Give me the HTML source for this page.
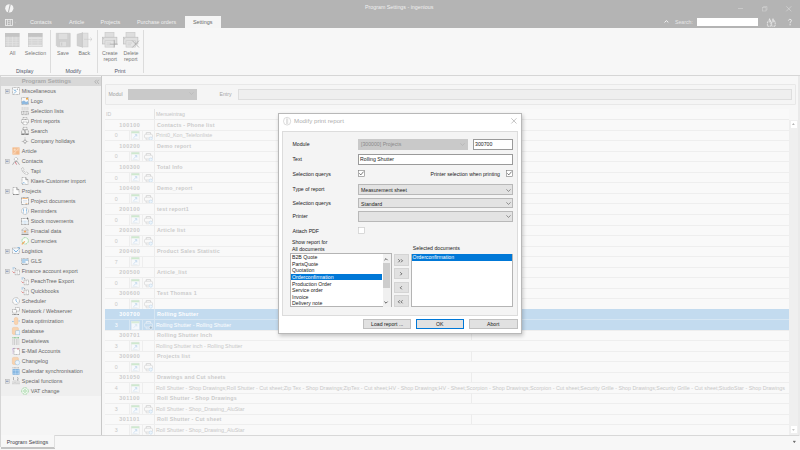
<!DOCTYPE html>
<html><head><meta charset="utf-8">
<style>
*{margin:0;padding:0;box-sizing:border-box}
html,body{width:800px;height:450px;overflow:hidden;background:#f5f5f5;font-family:"Liberation Sans",sans-serif;position:relative}
.a{position:absolute}
.t{position:absolute;white-space:nowrap;line-height:1}
svg{overflow:visible}
</style></head><body>

<div class="a" style="left:0px;top:0px;width:800px;height:27.7px;background:#b4b4b4"></div>
<svg class="a" style="left:4.5px;top:3.5px;" width="9" height="9" viewBox="0 0 9 9"><ellipse cx="4.3" cy="4.3" rx="4.1" ry="4.15" fill="#f4f4f4"/><path d="M5.3 0.2L3.4 8.4" stroke="#b4b4b4" stroke-width="1.1"/></svg>
<div class="t" style="left:365px;top:5.2px;font-size:5.3px;color:#f0f0f0;">Program Settings - ingenious</div>
<div class="a" style="left:738px;top:8px;width:5px;height:0.6px;background:#c8c8c8"></div>
<svg class="a" style="left:762px;top:6px;" width="6" height="6" viewBox="0 0 6 6"><rect x="0.5" y="1.5" width="3.5" height="3.5" fill="none" stroke="#d0d0d0" stroke-width="0.6"/><path d="M1.5 1.5 V0.5 H5 V4 H4" fill="none" stroke="#d0d0d0" stroke-width="0.6"/></svg>
<svg class="a" style="left:786px;top:5.5px;" width="6" height="6" viewBox="0 0 6 6"><path d="M0.3 0.3 L5.3 5.3 M5.3 0.3 L0.3 5.3" stroke="#dcdcdc" stroke-width="0.6"/></svg>
<svg class="a" style="left:5.2px;top:19px;" width="11" height="7" viewBox="0 0 11 7"><rect x="0.4" y="0.4" width="7" height="6" fill="none" stroke="#f0f0f0" stroke-width="0.8"/><path d="M2.5 0.4V6.4M5.3 0.4V6.4" stroke="#f0f0f0" stroke-width="0.7"/><path d="M2.5 2.3H5.3M2.5 4.4H5.3" stroke="#e0e0e0" stroke-width="0.7"/><path d="M9.6 3.2l0.8 0.6 0.8-0.6" fill="none" stroke="#dddddd" stroke-width="0.4"/></svg>
<div class="a" style="left:185px;top:15.7px;width:36px;height:13px;background:#f5f5f5"></div>
<div class="t" style="left:30px;top:20.3px;font-size:5.5px;color:#f0f0f0;">Contacts</div>
<div class="t" style="left:69px;top:20.3px;font-size:5.5px;color:#f0f0f0;">Article</div>
<div class="t" style="left:100.5px;top:20.3px;font-size:5.5px;color:#f0f0f0;">Projects</div>
<div class="t" style="left:137px;top:20.3px;font-size:5.35px;color:#f0f0f0;">Purchase orders</div>
<div class="t" style="left:193px;top:20.3px;font-size:5.4px;color:#6a6a6a;">Settings</div>
<svg class="a" style="left:664px;top:20.3px;" width="5" height="3" viewBox="0 0 5 3"><path d="M0.5 2.4 L2.4 0.6 L4.3 2.4" fill="none" stroke="#f6f6f6" stroke-width="1"/></svg>
<div class="t" style="left:675px;top:20.2px;font-size:5.2px;color:#e6e6e6;">Search:</div>
<div class="a" style="left:697px;top:17.8px;width:61px;height:8.3px;background:#ffffff"></div>
<svg class="a" style="left:766.8px;top:17.8px;" width="9" height="9" viewBox="0 0 9 9"><path d="M2.6 0.5V2M6 0.5V2" stroke="#ececec" stroke-width="1"/><path d="M1.5 2.2H3.6V4M5 2.2H7.1V4" fill="none" stroke="#ececec" stroke-width="0.9"/><rect x="0.4" y="3.8" width="3.5" height="4.4" fill="none" stroke="#ececec" stroke-width="0.9" stroke-dasharray="1.1 0.5"/><rect x="4.7" y="3.8" width="3.5" height="4.4" fill="none" stroke="#ececec" stroke-width="0.9" stroke-dasharray="1.1 0.5"/><path d="M3.9 5.2H4.7" stroke="#ececec" stroke-width="0.8"/></svg>
<svg class="a" style="left:788.4px;top:18.6px;" width="4" height="7" viewBox="0 0 4 7"><path d="M0.4 1.6C0.6 0.6 1.4 0.3 2 0.3C2.9 0.3 3.5 0.9 3.5 1.7C3.5 2.6 2.6 2.9 2.1 3.5V4.3" fill="none" stroke="#efefef" stroke-width="0.9"/><rect x="1.55" y="5.2" width="1.1" height="1.1" fill="#efefef"/></svg>
<div class="a" style="left:0px;top:27.7px;width:800px;height:47.3px;background:#f7f7f7"></div>
<div class="a" style="left:0px;top:75px;width:800px;height:1px;background:#d6d6d6"></div>
<svg class="a" style="left:5px;top:33px;" width="15" height="14" viewBox="0 0 15 14"><rect x="0.3" y="0.3" width="13.8" height="13.4" fill="#d5d5d5" stroke="#c6c6c6" stroke-width="0.6"/><rect x="0" y="0" width="14.4" height="3.8" fill="#c4c4c4"/><path d="M0.6 5H13.8" stroke="#e4e4e4" stroke-width="0.7"/><path d="M0.6 7.2H13.8" stroke="#e4e4e4" stroke-width="0.7"/><path d="M0.6 9.7H13.8" stroke="#e4e4e4" stroke-width="0.7"/><path d="M0.6 11.9H13.8" stroke="#e4e4e4" stroke-width="0.7"/><path d="M3.1 3.8V13.4" stroke="#e4e4e4" stroke-width="0.7"/><path d="M7.5 3.8V13.4" stroke="#e4e4e4" stroke-width="0.7"/><path d="M11 3.8V13.4" stroke="#e4e4e4" stroke-width="0.7"/></svg>
<svg class="a" style="left:28px;top:33px;" width="15" height="14" viewBox="0 0 15 14"><rect x="0.3" y="0.3" width="13.8" height="13.4" fill="#d5d5d5" stroke="#c6c6c6" stroke-width="0.6"/><rect x="0" y="0" width="14.4" height="3.8" fill="#c4c4c4"/><rect x="0.6" y="4.3" width="13.2" height="1.6" fill="#e6e6e6"/><rect x="0.6" y="11.8" width="13.2" height="1.6" fill="#e6e6e6"/><path d="M3.8 3.8V13.4" stroke="#e2e2e2" stroke-width="0.7"/><path d="M10 3.8V13.4" stroke="#e2e2e2" stroke-width="0.7"/><path d="M0.6 7.6H13.8" stroke="#e2e2e2" stroke-width="0.6"/><path d="M0.6 9.8H13.8" stroke="#e2e2e2" stroke-width="0.6"/></svg>
<svg class="a" style="left:56.4px;top:32.9px;" width="15" height="15" viewBox="0 0 15 15"><path d="M0.3 0.3H14.2V13.8H1.6L0.3 12.5Z" fill="#d0d0d0" stroke="#c6c6c6" stroke-width="0.6"/><rect x="2.3" y="0.4" width="9.5" height="6" fill="#dedede" stroke="#cacaca" stroke-width="0.5"/><rect x="3.8" y="8.4" width="6.7" height="5.4" fill="#dedede" stroke="#cacaca" stroke-width="0.5"/><rect x="5" y="9.6" width="1.3" height="3" fill="#cccccc"/></svg>
<svg class="a" style="left:77px;top:32px;" width="16" height="16" viewBox="0 0 16 16"><path d="M0.2 2.2L5.4 1.1V14.9L0.2 13.8Z" fill="#d0d0d0" stroke="#c2c2c2" stroke-width="0.6"/><rect x="5.4" y="1.1" width="5.6" height="13.8" fill="#e0e0e0" stroke="#cdcdcd" stroke-width="0.6"/><path d="M5.4 0V15.8" stroke="#c4c4c4" stroke-width="0.6"/><path d="M7 7.3H15M13.2 5.5L15 7.3L13.2 9.1" fill="none" stroke="#c8c8c8" stroke-width="0.6"/></svg>
<svg class="a" style="left:102px;top:32px;" width="16" height="16" viewBox="0 0 16 16"><rect x="3" y="0.4" width="9" height="5" fill="#dedede" stroke="#c6c6c6" stroke-width="0.6"/><rect x="0.3" y="5.2" width="14.6" height="6.8" fill="#e0e0e0" stroke="#bababa" stroke-width="0.6"/><rect x="1.2" y="6.3" width="0.9" height="0.9" fill="#bbb"/><rect x="3" y="8.8" width="9.3" height="6.3" fill="#e4e4e4" stroke="#c6c6c6" stroke-width="0.6"/><path d="M4.5 11H9M4.5 12.8H8" stroke="#c8c8c8" stroke-width="0.6"/><path d="M12.2 7.8V15.5M7.8 12.2H15.8" stroke="#a4a4a4" stroke-width="0.75"/></svg>
<svg class="a" style="left:123px;top:32px;" width="16" height="16" viewBox="0 0 16 16"><rect x="3" y="0.4" width="9" height="5" fill="#dedede" stroke="#c6c6c6" stroke-width="0.6"/><rect x="0.3" y="5.2" width="14.6" height="6.8" fill="#e0e0e0" stroke="#bababa" stroke-width="0.6"/><rect x="1.2" y="6.3" width="0.9" height="0.9" fill="#bbb"/><rect x="3" y="8.8" width="9.3" height="6.3" fill="#e4e4e4" stroke="#c6c6c6" stroke-width="0.6"/><path d="M4.5 11H9M4.5 12.8H8" stroke="#c8c8c8" stroke-width="0.6"/><path d="M9.3 8.6L16 15.5M16 8.6L9.3 15.5" stroke="#a4a4a4" stroke-width="0.75"/></svg>
<div class="t" style="left:9.5px;top:51.0px;font-size:5.3px;color:#777777;">All</div>
<div class="t" style="left:24.8px;top:51.0px;font-size:5.2px;color:#777777;">Selection</div>
<div class="t" style="left:57px;top:51.0px;font-size:5.2px;color:#777777;">Save</div>
<div class="t" style="left:78.5px;top:51.0px;font-size:5.2px;color:#777777;">Back</div>
<div class="t" style="left:102px;top:51.0px;font-size:5.2px;color:#777777;">Create</div>
<div class="t" style="left:103.5px;top:57.2px;font-size:5.2px;color:#777777;">report</div>
<div class="t" style="left:123.5px;top:51.0px;font-size:5.2px;color:#777777;">Delete</div>
<div class="t" style="left:124px;top:57.2px;font-size:5.2px;color:#777777;">report</div>
<div class="t" style="left:16px;top:69.3px;font-size:5.3px;color:#505468;">Display</div>
<div class="t" style="left:65.5px;top:69.3px;font-size:5.3px;color:#505468;">Modify</div>
<div class="t" style="left:114.5px;top:69.3px;font-size:5.3px;color:#505468;">Print</div>
<div class="a" style="left:50px;top:30px;width:0.7px;height:43px;background:#dcdcdc"></div>
<div class="a" style="left:97px;top:30px;width:0.7px;height:43px;background:#dcdcdc"></div>
<div class="a" style="left:143px;top:30px;width:0.7px;height:43px;background:#dcdcdc"></div>
<div class="a" style="left:0px;top:76px;width:101px;height:359px;background:#f5f5f5"></div>
<div class="a" style="left:0px;top:76px;width:1px;height:371px;background:#d6d6d6"></div>
<div class="a" style="left:1px;top:77px;width:100px;height:9px;background:#d8d8d8"></div>
<div class="t" style="left:21.7px;top:78.8px;font-size:5.95px;color:#a9a9a9;font-weight:bold;">Program Settings</div>
<svg class="a" style="left:94px;top:78.5px;" width="6" height="6" viewBox="0 0 6 6"><path d="M2.5 0.8L0.8 2.8L2.5 4.8M4.8 0.8L3.1 2.8L4.8 4.8" fill="none" stroke="#9a9a9a" stroke-width="0.6"/></svg>
<div class="a" style="left:1px;top:86px;width:100px;height:310px;background:#efefef"></div>
<svg class="a" style="left:5px;top:89.1px" width="5" height="5" viewBox="0 0 5 5"><rect x="0.25" y="0.25" width="4" height="4" fill="#e2e2e2" stroke="#b0b0b0" stroke-width="0.5"/><path d="M1 2.25H3.5" stroke="#5070a8" stroke-width="0.7"/></svg>
<svg class="a" style="left:12px;top:87px;" width="8" height="8" viewBox="0 0 8 8"><rect x="0.5" y="0.5" width="7" height="7" fill="#fafafa" stroke="#7a7a7a" stroke-width="0.5" stroke-dasharray="0.9 0.5"/><path d="M2 2.5L4 4.5L2 6.5M4 2.5L2.5 4" stroke="#5aa0d8" stroke-width="0.7" fill="none"/><path d="M5.5 1.5V3" stroke="#7a7a7a" stroke-width="0.5"/></svg>
<div class="t" style="left:21.8px;top:88.9px;font-size:5.4px;color:#686868;">Miscellaneous</div>
<svg class="a" style="left:21px;top:97px;" width="8" height="8" viewBox="0 0 8 8"><rect x="0.5" y="0.5" width="7" height="7" fill="#f6f6f6" stroke="#7a7a7a" stroke-width="0.5" stroke-dasharray="0.9 0.5"/><path d="M0.8 7.2V4.5L3 3.5L5 5L7.2 4V7.2Z" fill="#8cb8e0"/><circle cx="6" cy="1.8" r="1" fill="#f0a030"/></svg>
<div class="t" style="left:30.7px;top:98.9px;font-size:5.4px;color:#686868;">Logo</div>
<svg class="a" style="left:21px;top:107px;" width="8" height="8" viewBox="0 0 8 8"><path d="M1.2 0.3V3.2M3.1 0.3V3.2M5 0.3V3.2M6.9 0.3V3.2" stroke="#8a8a8a" stroke-width="0.45" stroke-dasharray="0.7 0.35"/><rect x="0.6" y="4.4" width="6.8" height="3.2" fill="#f6f6f6" stroke="#666" stroke-width="0.5" stroke-dasharray="0.9 0.5"/><path d="M0.6 6H7.4M2.8 4.4V7.6M5.2 4.4V7.6" stroke="#777" stroke-width="0.4" stroke-dasharray="0.9 0.5"/></svg>
<div class="t" style="left:30.7px;top:108.9px;font-size:5.4px;color:#686868;">Selection lists</div>
<svg class="a" style="left:21px;top:117px;" width="8" height="8" viewBox="0 0 8 8"><rect x="2" y="0.5" width="4" height="2" fill="none" stroke="#7a7a7a" stroke-width="0.5" stroke-dasharray="0.9 0.5"/><rect x="0.5" y="2.5" width="7" height="3.5" rx="0.8" fill="#f6f6f6" stroke="#7a7a7a" stroke-width="0.6" stroke-dasharray="0.9 0.5"/><rect x="2" y="5" width="4" height="2.6" fill="#fff" stroke="#7a7a7a" stroke-width="0.5" stroke-dasharray="0.9 0.5"/></svg>
<div class="t" style="left:30.7px;top:118.9px;font-size:5.4px;color:#686868;">Print reports</div>
<svg class="a" style="left:21px;top:127px;" width="8" height="8" viewBox="0 0 8 8"><rect x="2" y="0.4" width="4" height="2.4" fill="#f4f4f4" stroke="#666" stroke-width="0.5" stroke-dasharray="0.9 0.5"/><path d="M0.7 7.5V3.6L1.6 2.8H3.4V7.5M4.6 7.5V2.8H6.4L7.3 3.6V7.5" fill="#f6f6f6" stroke="#555" stroke-width="0.55" stroke-dasharray="0.9 0.5"/><rect x="0.5" y="6.6" width="3" height="1.2" fill="#666"/><rect x="4.5" y="6.6" width="3" height="1.2" fill="#666"/></svg>
<div class="t" style="left:30.7px;top:128.9px;font-size:5.4px;color:#686868;">Search</div>
<svg class="a" style="left:21px;top:137px;" width="8" height="8" viewBox="0 0 8 8"><path d="M4 0.5V7.5M0.8 4.5H7.2" stroke="#7a7a7a" stroke-width="0.5" stroke-dasharray="0.9 0.5"/><circle cx="4" cy="4.5" r="1.4" fill="#f4f4f4" stroke="#7a7a7a" stroke-width="0.5"/></svg>
<div class="t" style="left:30.7px;top:138.9px;font-size:5.4px;color:#686868;">Company holidays</div>
<svg class="a" style="left:12px;top:147px;" width="8" height="8" viewBox="0 0 8 8"><rect x="0.3" y="0.3" width="7.4" height="7.4" rx="0.6" fill="#f5c49c"/><rect x="1.2" y="1.2" width="2.8" height="2.8" fill="#f9dcc0" stroke="#eea870" stroke-width="0.35"/><path d="M1.5 6.8L6.8 1.5" stroke="#fae0c8" stroke-width="0.7"/><rect x="4.3" y="4.3" width="2.6" height="2.6" fill="#f3b888"/></svg>
<div class="t" style="left:21.8px;top:148.9px;font-size:5.4px;color:#686868;">Article</div>
<svg class="a" style="left:5px;top:159.1px" width="5" height="5" viewBox="0 0 5 5"><rect x="0.25" y="0.25" width="4" height="4" fill="#e2e2e2" stroke="#b0b0b0" stroke-width="0.5"/><path d="M1 2.25H3.5" stroke="#5070a8" stroke-width="0.7"/></svg>
<svg class="a" style="left:12px;top:157px;" width="8" height="8" viewBox="0 0 8 8"><circle cx="4" cy="2.2" r="1.7" fill="#fbfbfb" stroke="#7a7a7a" stroke-width="0.5" stroke-dasharray="0.9 0.5"/><path d="M0.5 7.8L2.8 4.4H5.2L7.5 7.8" fill="none" stroke="#7a7a7a" stroke-width="0.55"/><path d="M3.3 5L4.6 7.6" stroke="#d05060" stroke-width="0.7"/></svg>
<div class="t" style="left:21.8px;top:158.9px;font-size:5.4px;color:#686868;">Contacts</div>
<svg class="a" style="left:21px;top:167px;" width="8" height="8" viewBox="0 0 8 8"><path d="M0.8 1.5C0.5 3.5 2.5 6.5 5.5 7.5C6.5 7.5 7.5 6.8 7.2 6L5.6 5L4.6 5.8C3.5 5 2.8 4.2 2.2 3.2L3 2.2L2 0.6C1.4 0.5 1 1 0.8 1.5Z" fill="#f8f8f8" stroke="#7a7a7a" stroke-width="0.5" stroke-dasharray="0.9 0.5"/></svg>
<div class="t" style="left:30.7px;top:168.9px;font-size:5.4px;color:#686868;">Tapi</div>
<svg class="a" style="left:21px;top:177px;" width="8" height="8" viewBox="0 0 8 8"><path d="M1 0.5H4.8L7 2.7V7.5H1Z" fill="#fbfbfb" stroke="#7a7a7a" stroke-width="0.5" stroke-dasharray="0.9 0.5"/><path d="M4.8 0.5V2.7H7" fill="none" stroke="#555" stroke-width="0.5"/><path d="M1.5 6.8L2.8 5.3L4 6.5" fill="none" stroke="#6aa8dc" stroke-width="0.7"/></svg>
<div class="t" style="left:30.7px;top:178.9px;font-size:5.4px;color:#686868;">Klaes-Customer import</div>
<svg class="a" style="left:5px;top:189.1px" width="5" height="5" viewBox="0 0 5 5"><rect x="0.25" y="0.25" width="4" height="4" fill="#e2e2e2" stroke="#b0b0b0" stroke-width="0.5"/><path d="M1 2.25H3.5" stroke="#5070a8" stroke-width="0.7"/></svg>
<svg class="a" style="left:12px;top:187px;" width="8" height="8" viewBox="0 0 8 8"><path d="M1 0.5H4.8L7 2.7V7.5H1Z" fill="#fdfdfd" stroke="#7a7a7a" stroke-width="0.5" stroke-dasharray="0.9 0.5"/><path d="M4.8 0.5V2.7H7" fill="none" stroke="#555" stroke-width="0.5"/><path d="M1 7.5H7" stroke="#555" stroke-width="0.6" stroke-dasharray="0.9 0.5"/></svg>
<div class="t" style="left:21.8px;top:188.9px;font-size:5.4px;color:#686868;">Projects</div>
<svg class="a" style="left:21px;top:197px;" width="8" height="8" viewBox="0 0 8 8"><rect x="0.5" y="0.5" width="7" height="7" fill="#fafafa" stroke="#555" stroke-width="0.55" stroke-dasharray="0.9 0.5"/><path d="M1.3 1.5H6.7" stroke="#f0a050" stroke-width="0.7"/><path d="M2 3.5H6M2 5H6" stroke="#b8c8d8" stroke-width="0.4"/><path d="M4.5 6.5H6.5" stroke="#f0a050" stroke-width="0.5"/></svg>
<div class="t" style="left:30.7px;top:198.9px;font-size:5.4px;color:#686868;">Project documents</div>
<svg class="a" style="left:21px;top:207px;" width="8" height="8" viewBox="0 0 8 8"><circle cx="4" cy="4" r="3.4" fill="#fafafa" stroke="#7a7a7a" stroke-width="0.5" stroke-dasharray="0.9 0.5"/><path d="M2.5 1.8V6.3M5.5 1.8V6.3" stroke="#5aa0d8" stroke-width="0.8" stroke-dasharray="0.9 0.5"/></svg>
<div class="t" style="left:30.7px;top:208.9px;font-size:5.4px;color:#686868;">Reminders</div>
<svg class="a" style="left:21px;top:217px;" width="8" height="8" viewBox="0 0 8 8"><rect x="0.5" y="1.5" width="7" height="6" fill="#fafafa" stroke="#555" stroke-width="0.55" stroke-dasharray="0.9 0.5"/><path d="M1.5 4.2H6.5M1.5 6H6.5" stroke="#6aa8dc" stroke-width="0.5" stroke-dasharray="0.9 0.5"/><path d="M6.5 0.5V2.5" stroke="#444" stroke-width="0.6"/></svg>
<div class="t" style="left:30.7px;top:218.9px;font-size:5.4px;color:#686868;">Stock movements</div>
<svg class="a" style="left:21px;top:227px;" width="8" height="8" viewBox="0 0 8 8"><path d="M0.5 3L4 0.6L7.5 3Z" fill="#f8f8f8" stroke="#7a7a7a" stroke-width="0.5" stroke-dasharray="0.9 0.5"/><path d="M1.2 3.5V7M3 3.5V7M5 3.5V7M6.8 3.5V7" stroke="#7a7a7a" stroke-width="0.5" stroke-dasharray="0.9 0.5"/><circle cx="4" cy="4.5" r="1.1" fill="#f4a860"/><path d="M0.5 7.5H7.5" stroke="#555" stroke-width="0.6"/></svg>
<div class="t" style="left:30.7px;top:228.9px;font-size:5.4px;color:#686868;">Finacial data</div>
<svg class="a" style="left:21px;top:237px;" width="8" height="8" viewBox="0 0 8 8"><circle cx="4.2" cy="3.8" r="3.2" fill="#f6fbf6" stroke="#6cc070" stroke-width="0.7" stroke-dasharray="1 0.5"/><path d="M0.8 7.4L3.8 4.4" stroke="#f4a860" stroke-width="1.2"/></svg>
<div class="t" style="left:30.7px;top:238.9px;font-size:5.4px;color:#686868;">Currencies</div>
<svg class="a" style="left:5px;top:249.1px" width="5" height="5" viewBox="0 0 5 5"><rect x="0.25" y="0.25" width="4" height="4" fill="#e2e2e2" stroke="#b0b0b0" stroke-width="0.5"/><path d="M1 2.25H3.5" stroke="#5070a8" stroke-width="0.7"/></svg>
<svg class="a" style="left:12px;top:247px;" width="8" height="8" viewBox="0 0 8 8"><rect x="0.5" y="1" width="6.8" height="5.5" fill="#f4f8fc" stroke="#7a7a7a" stroke-width="0.5" stroke-dasharray="0.9 0.5"/><path d="M1.5 2.5L4 5L6.5 2.5" stroke="#5aa0d8" stroke-width="0.8" fill="none"/><path d="M5.5 0.5H7.5V2" stroke="#5aa0d8" stroke-width="0.6" fill="none"/></svg>
<div class="t" style="left:21.8px;top:248.9px;font-size:5.4px;color:#686868;">Logistics</div>
<svg class="a" style="left:21px;top:257px;" width="8" height="8" viewBox="0 0 8 8"><rect x="0.5" y="1.5" width="7" height="5.5" fill="#f4f8fc" stroke="#7a7a7a" stroke-width="0.5" stroke-dasharray="0.9 0.5"/><path d="M1 3H7M1 5H4.5" stroke="#5aa0d8" stroke-width="0.9"/><path d="M1 7.5H7" stroke="#555" stroke-width="0.5" stroke-dasharray="0.9 0.5"/></svg>
<div class="t" style="left:30.7px;top:258.9px;font-size:5.4px;color:#686868;">GLS</div>
<svg class="a" style="left:5px;top:269.1px" width="5" height="5" viewBox="0 0 5 5"><rect x="0.25" y="0.25" width="4" height="4" fill="#e2e2e2" stroke="#b0b0b0" stroke-width="0.5"/><path d="M1 2.25H3.5" stroke="#5070a8" stroke-width="0.7"/></svg>
<svg class="a" style="left:12px;top:267px;" width="8" height="8" viewBox="0 0 8 8"><path d="M0.5 0.8H2.8M0.5 2H2" stroke="#6aa8dc" stroke-width="0.5"/><path d="M3 0.8L4 2" stroke="#555" stroke-width="0.5"/><path d="M3 3H7.5V7.7H3Z" fill="#fafafa" stroke="#7a7a7a" stroke-width="0.5" stroke-dasharray="0.9 0.5"/><path d="M5.2 3V7.7" stroke="#7a7a7a" stroke-width="0.45" stroke-dasharray="0.9 0.5"/><path d="M0.5 4.5L1.8 5.8L2.6 5" stroke="#e04848" stroke-width="0.6" fill="none"/></svg>
<div class="t" style="left:21.8px;top:268.9px;font-size:5.4px;color:#686868;">Finance account export</div>
<svg class="a" style="left:21px;top:277px;" width="8" height="8" viewBox="0 0 8 8"><path d="M0.5 0.8H2.8M0.5 2H2" stroke="#6aa8dc" stroke-width="0.5"/><path d="M3 0.8L4 2" stroke="#555" stroke-width="0.5"/><path d="M3 3H7.5V7.7H3Z" fill="#fafafa" stroke="#7a7a7a" stroke-width="0.5" stroke-dasharray="0.9 0.5"/><path d="M5.2 3V7.7" stroke="#7a7a7a" stroke-width="0.45" stroke-dasharray="0.9 0.5"/><path d="M0.5 4.5L1.8 5.8L2.6 5" stroke="#e04848" stroke-width="0.6" fill="none"/></svg>
<div class="t" style="left:30.7px;top:278.9px;font-size:5.4px;color:#686868;">PeachTree Export</div>
<svg class="a" style="left:21px;top:287px;" width="8" height="8" viewBox="0 0 8 8"><path d="M0.5 0.8H2.8M0.5 2H2" stroke="#6aa8dc" stroke-width="0.5"/><path d="M3 0.8L4 2" stroke="#555" stroke-width="0.5"/><path d="M3 3H7.5V7.7H3Z" fill="#fafafa" stroke="#7a7a7a" stroke-width="0.5" stroke-dasharray="0.9 0.5"/><path d="M5.2 3V7.7" stroke="#7a7a7a" stroke-width="0.45" stroke-dasharray="0.9 0.5"/><path d="M0.5 4.5L1.8 5.8L2.6 5" stroke="#e04848" stroke-width="0.6" fill="none"/></svg>
<div class="t" style="left:30.7px;top:288.9px;font-size:5.4px;color:#686868;">Quickbooks</div>
<svg class="a" style="left:12px;top:297px;" width="8" height="8" viewBox="0 0 8 8"><circle cx="4" cy="4" r="3.4" fill="#fbfbfb" stroke="#7a7a7a" stroke-width="0.55" stroke-dasharray="0.9 0.5"/><path d="M4 1.8V4L5.5 5.5" stroke="#5aa0d8" stroke-width="0.6" fill="none"/></svg>
<div class="t" style="left:21.8px;top:298.9px;font-size:5.4px;color:#686868;">Scheduler</div>
<svg class="a" style="left:12px;top:307px;" width="8" height="8" viewBox="0 0 8 8"><rect x="3.5" y="0.5" width="4" height="3.5" fill="#fafafa" stroke="#7a7a7a" stroke-width="0.5" stroke-dasharray="0.9 0.5"/><rect x="0.5" y="2.5" width="4" height="3.5" fill="#fafafa" stroke="#7a7a7a" stroke-width="0.5" stroke-dasharray="0.9 0.5"/><path d="M0.5 7.5H7.5" stroke="#555" stroke-width="0.8" stroke-dasharray="0.9 0.5"/></svg>
<div class="t" style="left:21.8px;top:308.9px;font-size:5.4px;color:#686868;">Network / Webserver</div>
<svg class="a" style="left:12px;top:317px;" width="8" height="8" viewBox="0 0 8 8"><rect x="2.3" y="0.4" width="3.6" height="7.2" rx="1.6" fill="#f8d4b0" stroke="#f0b888" stroke-width="0.4"/><path d="M0 4.5H1.8M6.4 4H8" stroke="#6aa8dc" stroke-width="0.6"/></svg>
<div class="t" style="left:21.8px;top:318.9px;font-size:5.4px;color:#686868;">Data optimization</div>
<svg class="a" style="left:12px;top:327px;" width="8" height="8" viewBox="0 0 8 8"><rect x="0.4" y="0.4" width="6" height="7" rx="1.2" fill="#f8d4b0" stroke="#f0b888" stroke-width="0.4"/><rect x="3.8" y="3.8" width="4" height="4" fill="#eaf3fb" stroke="#8cc0e8" stroke-width="0.45"/></svg>
<div class="t" style="left:21.8px;top:328.9px;font-size:5.4px;color:#686868;">database</div>
<svg class="a" style="left:12px;top:337px;" width="8" height="8" viewBox="0 0 8 8"><path d="M0.5 0.8H7.5" stroke="#58b060" stroke-width="1" stroke-dasharray="0.9 0.5"/><path d="M0.5 3H7.5M0.5 5H7.5M0.5 7H7.5" stroke="#666" stroke-width="0.6" stroke-dasharray="0.8 0.9"/></svg>
<div class="t" style="left:21.8px;top:338.9px;font-size:5.4px;color:#686868;">Detailviews</div>
<svg class="a" style="left:12px;top:347px;" width="8" height="8" viewBox="0 0 8 8"><path d="M0.3 2.2L2.2 1.2" stroke="#a070c8" stroke-width="0.7"/><rect x="2" y="1.5" width="5.5" height="6" fill="#fafafa" stroke="#7a7a7a" stroke-width="0.5" stroke-dasharray="0.9 0.5"/><path d="M6 1V3" stroke="#e05060" stroke-width="0.6"/><path d="M1 3V7" stroke="#b080d0" stroke-width="0.5" stroke-dasharray="0.9 0.5"/></svg>
<div class="t" style="left:21.8px;top:348.9px;font-size:5.4px;color:#686868;">E-Mail Accounts</div>
<svg class="a" style="left:12px;top:357px;" width="8" height="8" viewBox="0 0 8 8"><rect x="0.4" y="0.4" width="6" height="7" rx="1.2" fill="#f8d4b0" stroke="#f0b888" stroke-width="0.4"/><circle cx="5.4" cy="5.6" r="2.3" fill="#eaf3fb" stroke="#8cc0e8" stroke-width="0.45"/></svg>
<div class="t" style="left:21.8px;top:358.9px;font-size:5.4px;color:#686868;">Changelog</div>
<svg class="a" style="left:12px;top:367px;" width="8" height="8" viewBox="0 0 8 8"><path d="M0.5 0.8H7.5" stroke="#7a7a7a" stroke-width="0.6" stroke-dasharray="0.9 0.5"/><rect x="0.6" y="2.2" width="6.8" height="5.4" fill="#3a8ad0" opacity="0.85"/><path d="M0.6 3.5H7.4M0.6 5H7.4M0.6 6.5H7.4M2 2.2V7.6M3.5 2.2V7.6M5 2.2V7.6M6.4 2.2V7.6" stroke="#d8eaf8" stroke-width="0.45"/></svg>
<div class="t" style="left:21.8px;top:368.9px;font-size:5.4px;color:#686868;">Calendar synchronisation</div>
<svg class="a" style="left:5px;top:379.1px" width="5" height="5" viewBox="0 0 5 5"><rect x="0.25" y="0.25" width="4" height="4" fill="#e2e2e2" stroke="#b0b0b0" stroke-width="0.5"/><path d="M1 2.25H3.5" stroke="#5070a8" stroke-width="0.7"/></svg>
<svg class="a" style="left:12px;top:377px;" width="8" height="8" viewBox="0 0 8 8"><path d="M1.5 0.5V3.2M1 0.8L1.5 0.5M5 0.5C6.5 0.5 6.5 2 5 3.2H6.5" stroke="#7a7a7a" stroke-width="0.5" fill="none"/><path d="M1 4.5V7.5M3 3.5V7.5M5 4.5V7.5M7 4.5V7.5" stroke="#7a7a7a" stroke-width="0.55" stroke-dasharray="0.9 0.5"/></svg>
<div class="t" style="left:21.8px;top:378.9px;font-size:5.4px;color:#686868;">Special functions</div>
<svg class="a" style="left:21px;top:387px;" width="8" height="8" viewBox="0 0 8 8"><circle cx="4" cy="4" r="3.3" fill="#f2f9f2" stroke="#6cc070" stroke-width="0.7" stroke-dasharray="0.9 0.6"/><circle cx="4" cy="4" r="1.3" fill="none" stroke="#6cc070" stroke-width="0.5"/></svg>
<div class="t" style="left:30.7px;top:388.9px;font-size:5.4px;color:#686868;">VAT change</div>
<div class="a" style="left:1px;top:435px;width:800px;height:15px;background:#f7f7f7"></div>
<div class="a" style="left:54px;top:434.6px;width:746px;height:0.6px;background:#d6d6d6"></div>
<div class="a" style="left:1px;top:435px;width:53px;height:12px;background:#f7f7f7"></div>
<div class="a" style="left:1px;top:447.2px;width:53.5px;height:1.6px;background:#c4c4c4"></div>
<div class="a" style="left:53.8px;top:435px;width:0.6px;height:12.5px;background:#e0e0e0"></div>
<div class="t" style="left:6.8px;top:440.2px;font-size:5.35px;color:#404048;">Program Settings</div>
<div class="a" style="left:101px;top:76px;width:699px;height:359px;background:#f7f7f7"></div>
<div class="a" style="left:100.5px;top:76px;width:1.2px;height:359px;background:#c8c8c8"></div>
<div class="a" style="left:104.5px;top:83.5px;width:691px;height:21.5px;background:#f5f5f5;border:1px solid #e8e8e8;border-radius:1px"></div>
<div class="t" style="left:108.5px;top:92px;font-size:5.2px;color:#a2a2a2;">Modul</div>
<div class="a" style="left:128px;top:89px;width:69px;height:10.5px;background:#c9c9c9"></div>
<svg class="a" style="left:189px;top:92px;" width="5" height="3" viewBox="0 0 5 3"><path d="M0.4 0.4L2.5 2.4L4.6 0.4" fill="none" stroke="#b0b0b0" stroke-width="0.5"/></svg>
<div class="t" style="left:219.5px;top:92px;font-size:5.2px;color:#a6a6a6;">Entry</div>
<div class="a" style="left:238px;top:89px;width:554px;height:10.8px;background:#efefef;border:1px solid #dedede"></div>
<div class="a" style="left:104.8px;top:108.7px;width:684.2px;height:326.5px;background:#f9f9f9"></div>
<div class="a" style="left:789px;top:108.7px;width:9px;height:10.8px;background:#f7f7f7"></div>
<div class="t" style="left:106px;top:111.5px;font-size:5.2px;color:#c4c4c4;">ID</div>
<div class="t" style="left:156px;top:111.5px;font-size:5.2px;color:#c4c4c4;">Menueintrag</div>
<div class="a" style="left:154.2px;top:108.7px;width:0.6px;height:10.6px;background:#e4e4e4"></div>
<div class="a" style="left:104.8px;top:119.3px;width:684.2px;height:0.6px;background:#ececec"></div>
<div class="t" style="left:119.3px;top:122.9px;font-size:5.4px;color:#cccccc;font-weight:bold;letter-spacing:0.5px">100100</div>
<div class="t" style="left:157px;top:122.9px;font-size:5.3px;color:#cbcbcb;font-weight:bold;letter-spacing:0.24px">Contacts - Phone list</div>
<div class="a" style="left:154.2px;top:119.6px;width:0.6px;height:10.52px;background:#ececec"></div>
<div class="a" style="left:471px;top:119.6px;width:0.6px;height:10.52px;background:#ececec"></div>
<div class="a" style="left:104.8px;top:129.82px;width:684.2px;height:0.6px;background:#eeeeee"></div>
<div class="t" style="left:114.8px;top:133.42px;font-size:5.3px;color:#c8c8c8;">0</div>
<div class="a" style="left:128.5px;top:130.12px;width:0.6px;height:10.52px;background:#eeeeee"></div>
<div class="a" style="left:141.6px;top:130.12px;width:0.6px;height:10.52px;background:#eeeeee"></div>
<div class="a" style="left:154.2px;top:130.12px;width:0.6px;height:10.52px;background:#eeeeee"></div>
<svg class="a" style="left:131px;top:131.22px;" width="9" height="9" viewBox="0 0 9 9"><rect x="0.3" y="0.3" width="8" height="8.5" rx="0.4" fill="#f8fafc" stroke="#dcdcdc" stroke-width="0.5"/><rect x="0.3" y="0.3" width="8" height="2" fill="#cfe8cf"/><path d="M2.6 6.8L5.6 3.8M3.9 3.6H5.8V5.5" stroke="#a8c8e8" stroke-width="0.55" fill="none"/><path d="M1.5 7.6H6.5" stroke="#d0dce8" stroke-width="0.4"/></svg>
<svg class="a" style="left:144.2px;top:131.62px;" width="9" height="9" viewBox="0 0 9 9"><path d="M2.3 2.2V0.5H6.5V2.2" fill="none" stroke="#cfcfcf" stroke-width="0.7"/><rect x="0.5" y="2.2" width="8" height="3.8" rx="1.2" fill="none" stroke="#cfcfcf" stroke-width="0.6"/><path d="M2.2 6V7.8H5" fill="none" stroke="#cfcfcf" stroke-width="0.5"/><circle cx="6.8" cy="6.6" r="1.6" fill="#eef5fb" stroke="#b8d4ec" stroke-width="0.5"/></svg>
<div class="t" style="left:156px;top:133.42px;font-size:5.37px;color:#c8c8c8;">Print0_Kon_Telefonliste</div>
<div class="a" style="left:104.8px;top:140.34px;width:684.2px;height:0.6px;background:#eeeeee"></div>
<div class="t" style="left:119.3px;top:143.94px;font-size:5.4px;color:#cccccc;font-weight:bold;letter-spacing:0.5px">100200</div>
<div class="t" style="left:157px;top:143.94px;font-size:5.3px;color:#cbcbcb;font-weight:bold;letter-spacing:0.24px">Demo report</div>
<div class="a" style="left:154.2px;top:140.64px;width:0.6px;height:10.52px;background:#ececec"></div>
<div class="a" style="left:471px;top:140.64px;width:0.6px;height:10.52px;background:#ececec"></div>
<div class="a" style="left:104.8px;top:150.85999999999999px;width:684.2px;height:0.6px;background:#eeeeee"></div>
<div class="t" style="left:114.8px;top:154.46px;font-size:5.3px;color:#c8c8c8;">0</div>
<div class="a" style="left:128.5px;top:151.16px;width:0.6px;height:10.52px;background:#eeeeee"></div>
<div class="a" style="left:141.6px;top:151.16px;width:0.6px;height:10.52px;background:#eeeeee"></div>
<div class="a" style="left:154.2px;top:151.16px;width:0.6px;height:10.52px;background:#eeeeee"></div>
<svg class="a" style="left:131px;top:152.26px;" width="9" height="9" viewBox="0 0 9 9"><rect x="0.3" y="0.3" width="8" height="8.5" rx="0.4" fill="#f8fafc" stroke="#dcdcdc" stroke-width="0.5"/><rect x="0.3" y="0.3" width="8" height="2" fill="#cfe8cf"/><path d="M2.6 6.8L5.6 3.8M3.9 3.6H5.8V5.5" stroke="#a8c8e8" stroke-width="0.55" fill="none"/><path d="M1.5 7.6H6.5" stroke="#d0dce8" stroke-width="0.4"/></svg>
<svg class="a" style="left:144.2px;top:152.66px;" width="9" height="9" viewBox="0 0 9 9"><path d="M2.3 2.2V0.5H6.5V2.2" fill="none" stroke="#cfcfcf" stroke-width="0.7"/><rect x="0.5" y="2.2" width="8" height="3.8" rx="1.2" fill="none" stroke="#cfcfcf" stroke-width="0.6"/><path d="M2.2 6V7.8H5" fill="none" stroke="#cfcfcf" stroke-width="0.5"/><circle cx="6.8" cy="6.6" r="1.6" fill="#eef5fb" stroke="#b8d4ec" stroke-width="0.5"/></svg>
<div class="a" style="left:104.8px;top:161.38px;width:684.2px;height:0.6px;background:#eeeeee"></div>
<div class="t" style="left:119.3px;top:164.98px;font-size:5.4px;color:#cccccc;font-weight:bold;letter-spacing:0.5px">100300</div>
<div class="t" style="left:157px;top:164.98px;font-size:5.3px;color:#cbcbcb;font-weight:bold;letter-spacing:0.24px">Total Info</div>
<div class="a" style="left:154.2px;top:161.68px;width:0.6px;height:10.52px;background:#ececec"></div>
<div class="a" style="left:471px;top:161.68px;width:0.6px;height:10.52px;background:#ececec"></div>
<div class="a" style="left:104.8px;top:171.9px;width:684.2px;height:0.6px;background:#eeeeee"></div>
<div class="t" style="left:114.8px;top:175.5px;font-size:5.3px;color:#c8c8c8;">0</div>
<div class="a" style="left:128.5px;top:172.2px;width:0.6px;height:10.52px;background:#eeeeee"></div>
<div class="a" style="left:141.6px;top:172.2px;width:0.6px;height:10.52px;background:#eeeeee"></div>
<div class="a" style="left:154.2px;top:172.2px;width:0.6px;height:10.52px;background:#eeeeee"></div>
<svg class="a" style="left:131px;top:173.29999999999998px;" width="9" height="9" viewBox="0 0 9 9"><rect x="0.3" y="0.3" width="8" height="8.5" rx="0.4" fill="#f8fafc" stroke="#dcdcdc" stroke-width="0.5"/><rect x="0.3" y="0.3" width="8" height="2" fill="#cfe8cf"/><path d="M2.6 6.8L5.6 3.8M3.9 3.6H5.8V5.5" stroke="#a8c8e8" stroke-width="0.55" fill="none"/><path d="M1.5 7.6H6.5" stroke="#d0dce8" stroke-width="0.4"/></svg>
<svg class="a" style="left:144.2px;top:173.7px;" width="9" height="9" viewBox="0 0 9 9"><path d="M2.3 2.2V0.5H6.5V2.2" fill="none" stroke="#cfcfcf" stroke-width="0.7"/><rect x="0.5" y="2.2" width="8" height="3.8" rx="1.2" fill="none" stroke="#cfcfcf" stroke-width="0.6"/><path d="M2.2 6V7.8H5" fill="none" stroke="#cfcfcf" stroke-width="0.5"/><circle cx="6.8" cy="6.6" r="1.6" fill="#eef5fb" stroke="#b8d4ec" stroke-width="0.5"/></svg>
<div class="a" style="left:104.8px;top:182.42px;width:684.2px;height:0.6px;background:#eeeeee"></div>
<div class="t" style="left:119.3px;top:186.02px;font-size:5.4px;color:#cccccc;font-weight:bold;letter-spacing:0.5px">100400</div>
<div class="t" style="left:157px;top:186.02px;font-size:5.3px;color:#cbcbcb;font-weight:bold;letter-spacing:0.24px">Demo_report</div>
<div class="a" style="left:154.2px;top:182.72px;width:0.6px;height:10.52px;background:#ececec"></div>
<div class="a" style="left:471px;top:182.72px;width:0.6px;height:10.52px;background:#ececec"></div>
<div class="a" style="left:104.8px;top:192.94px;width:684.2px;height:0.6px;background:#eeeeee"></div>
<div class="t" style="left:114.8px;top:196.54px;font-size:5.3px;color:#c8c8c8;">0</div>
<div class="a" style="left:128.5px;top:193.24px;width:0.6px;height:10.52px;background:#eeeeee"></div>
<div class="a" style="left:141.6px;top:193.24px;width:0.6px;height:10.52px;background:#eeeeee"></div>
<div class="a" style="left:154.2px;top:193.24px;width:0.6px;height:10.52px;background:#eeeeee"></div>
<svg class="a" style="left:131px;top:194.34px;" width="9" height="9" viewBox="0 0 9 9"><rect x="0.3" y="0.3" width="8" height="8.5" rx="0.4" fill="#f8fafc" stroke="#dcdcdc" stroke-width="0.5"/><rect x="0.3" y="0.3" width="8" height="2" fill="#cfe8cf"/><path d="M2.6 6.8L5.6 3.8M3.9 3.6H5.8V5.5" stroke="#a8c8e8" stroke-width="0.55" fill="none"/><path d="M1.5 7.6H6.5" stroke="#d0dce8" stroke-width="0.4"/></svg>
<svg class="a" style="left:144.2px;top:194.74px;" width="9" height="9" viewBox="0 0 9 9"><path d="M2.3 2.2V0.5H6.5V2.2" fill="none" stroke="#cfcfcf" stroke-width="0.7"/><rect x="0.5" y="2.2" width="8" height="3.8" rx="1.2" fill="none" stroke="#cfcfcf" stroke-width="0.6"/><path d="M2.2 6V7.8H5" fill="none" stroke="#cfcfcf" stroke-width="0.5"/><circle cx="6.8" cy="6.6" r="1.6" fill="#eef5fb" stroke="#b8d4ec" stroke-width="0.5"/></svg>
<div class="a" style="left:104.8px;top:203.46px;width:684.2px;height:0.6px;background:#eeeeee"></div>
<div class="t" style="left:119.3px;top:207.06px;font-size:5.4px;color:#cccccc;font-weight:bold;letter-spacing:0.5px">200100</div>
<div class="t" style="left:157px;top:207.06px;font-size:5.3px;color:#cbcbcb;font-weight:bold;letter-spacing:0.24px">test report1</div>
<div class="a" style="left:154.2px;top:203.76px;width:0.6px;height:10.52px;background:#ececec"></div>
<div class="a" style="left:471px;top:203.76px;width:0.6px;height:10.52px;background:#ececec"></div>
<div class="a" style="left:104.8px;top:213.98px;width:684.2px;height:0.6px;background:#eeeeee"></div>
<div class="t" style="left:114.8px;top:217.58px;font-size:5.3px;color:#c8c8c8;">0</div>
<div class="a" style="left:128.5px;top:214.27999999999997px;width:0.6px;height:10.52px;background:#eeeeee"></div>
<div class="a" style="left:141.6px;top:214.27999999999997px;width:0.6px;height:10.52px;background:#eeeeee"></div>
<div class="a" style="left:154.2px;top:214.27999999999997px;width:0.6px;height:10.52px;background:#eeeeee"></div>
<svg class="a" style="left:131px;top:215.37999999999997px;" width="9" height="9" viewBox="0 0 9 9"><rect x="0.3" y="0.3" width="8" height="8.5" rx="0.4" fill="#f8fafc" stroke="#dcdcdc" stroke-width="0.5"/><rect x="0.3" y="0.3" width="8" height="2" fill="#cfe8cf"/><path d="M2.6 6.8L5.6 3.8M3.9 3.6H5.8V5.5" stroke="#a8c8e8" stroke-width="0.55" fill="none"/><path d="M1.5 7.6H6.5" stroke="#d0dce8" stroke-width="0.4"/></svg>
<svg class="a" style="left:144.2px;top:215.77999999999997px;" width="9" height="9" viewBox="0 0 9 9"><path d="M2.3 2.2V0.5H6.5V2.2" fill="none" stroke="#cfcfcf" stroke-width="0.7"/><rect x="0.5" y="2.2" width="8" height="3.8" rx="1.2" fill="none" stroke="#cfcfcf" stroke-width="0.6"/><path d="M2.2 6V7.8H5" fill="none" stroke="#cfcfcf" stroke-width="0.5"/><circle cx="6.8" cy="6.6" r="1.6" fill="#eef5fb" stroke="#b8d4ec" stroke-width="0.5"/></svg>
<div class="a" style="left:104.8px;top:224.49999999999997px;width:684.2px;height:0.6px;background:#eeeeee"></div>
<div class="t" style="left:119.3px;top:228.1px;font-size:5.4px;color:#cccccc;font-weight:bold;letter-spacing:0.5px">200200</div>
<div class="t" style="left:157px;top:228.1px;font-size:5.3px;color:#cbcbcb;font-weight:bold;letter-spacing:0.24px">Article list</div>
<div class="a" style="left:154.2px;top:224.79999999999998px;width:0.6px;height:10.52px;background:#ececec"></div>
<div class="a" style="left:471px;top:224.79999999999998px;width:0.6px;height:10.52px;background:#ececec"></div>
<div class="a" style="left:104.8px;top:235.01999999999998px;width:684.2px;height:0.6px;background:#eeeeee"></div>
<div class="t" style="left:114.8px;top:238.62px;font-size:5.3px;color:#c8c8c8;">0</div>
<div class="a" style="left:128.5px;top:235.32px;width:0.6px;height:10.52px;background:#eeeeee"></div>
<div class="a" style="left:141.6px;top:235.32px;width:0.6px;height:10.52px;background:#eeeeee"></div>
<div class="a" style="left:154.2px;top:235.32px;width:0.6px;height:10.52px;background:#eeeeee"></div>
<svg class="a" style="left:131px;top:236.42px;" width="9" height="9" viewBox="0 0 9 9"><rect x="0.3" y="0.3" width="8" height="8.5" rx="0.4" fill="#f8fafc" stroke="#dcdcdc" stroke-width="0.5"/><rect x="0.3" y="0.3" width="8" height="2" fill="#cfe8cf"/><path d="M2.6 6.8L5.6 3.8M3.9 3.6H5.8V5.5" stroke="#a8c8e8" stroke-width="0.55" fill="none"/><path d="M1.5 7.6H6.5" stroke="#d0dce8" stroke-width="0.4"/></svg>
<svg class="a" style="left:144.2px;top:236.82px;" width="9" height="9" viewBox="0 0 9 9"><path d="M2.3 2.2V0.5H6.5V2.2" fill="none" stroke="#cfcfcf" stroke-width="0.7"/><rect x="0.5" y="2.2" width="8" height="3.8" rx="1.2" fill="none" stroke="#cfcfcf" stroke-width="0.6"/><path d="M2.2 6V7.8H5" fill="none" stroke="#cfcfcf" stroke-width="0.5"/><circle cx="6.8" cy="6.6" r="1.6" fill="#eef5fb" stroke="#b8d4ec" stroke-width="0.5"/></svg>
<div class="a" style="left:104.8px;top:245.54px;width:684.2px;height:0.6px;background:#eeeeee"></div>
<div class="t" style="left:119.3px;top:249.14px;font-size:5.4px;color:#cccccc;font-weight:bold;letter-spacing:0.5px">200400</div>
<div class="t" style="left:157px;top:249.14px;font-size:5.3px;color:#cbcbcb;font-weight:bold;letter-spacing:0.24px">Product Sales Statistic</div>
<div class="a" style="left:154.2px;top:245.83999999999997px;width:0.6px;height:10.52px;background:#ececec"></div>
<div class="a" style="left:471px;top:245.83999999999997px;width:0.6px;height:10.52px;background:#ececec"></div>
<div class="a" style="left:104.8px;top:256.05999999999995px;width:684.2px;height:0.6px;background:#eeeeee"></div>
<div class="t" style="left:114.8px;top:259.66px;font-size:5.3px;color:#c8c8c8;">7</div>
<div class="a" style="left:128.5px;top:256.36px;width:0.6px;height:10.52px;background:#eeeeee"></div>
<div class="a" style="left:141.6px;top:256.36px;width:0.6px;height:10.52px;background:#eeeeee"></div>
<div class="a" style="left:154.2px;top:256.36px;width:0.6px;height:10.52px;background:#eeeeee"></div>
<svg class="a" style="left:131px;top:257.46000000000004px;" width="9" height="9" viewBox="0 0 9 9"><rect x="0.3" y="0.3" width="8" height="8.5" rx="0.4" fill="#f8fafc" stroke="#dcdcdc" stroke-width="0.5"/><rect x="0.3" y="0.3" width="8" height="2" fill="#cfe8cf"/><path d="M2.6 6.8L5.6 3.8M3.9 3.6H5.8V5.5" stroke="#a8c8e8" stroke-width="0.55" fill="none"/><path d="M1.5 7.6H6.5" stroke="#d0dce8" stroke-width="0.4"/></svg>
<div class="a" style="left:104.8px;top:266.58px;width:684.2px;height:0.6px;background:#eeeeee"></div>
<div class="t" style="left:119.3px;top:270.18px;font-size:5.4px;color:#cccccc;font-weight:bold;letter-spacing:0.5px">200500</div>
<div class="t" style="left:157px;top:270.18px;font-size:5.3px;color:#cbcbcb;font-weight:bold;letter-spacing:0.24px">Article_list</div>
<div class="a" style="left:154.2px;top:266.88px;width:0.6px;height:10.52px;background:#ececec"></div>
<div class="a" style="left:471px;top:266.88px;width:0.6px;height:10.52px;background:#ececec"></div>
<div class="a" style="left:104.8px;top:277.09999999999997px;width:684.2px;height:0.6px;background:#eeeeee"></div>
<div class="t" style="left:114.8px;top:280.7px;font-size:5.3px;color:#c8c8c8;">0</div>
<div class="a" style="left:128.5px;top:277.4px;width:0.6px;height:10.52px;background:#eeeeee"></div>
<div class="a" style="left:141.6px;top:277.4px;width:0.6px;height:10.52px;background:#eeeeee"></div>
<div class="a" style="left:154.2px;top:277.4px;width:0.6px;height:10.52px;background:#eeeeee"></div>
<svg class="a" style="left:131px;top:278.5px;" width="9" height="9" viewBox="0 0 9 9"><rect x="0.3" y="0.3" width="8" height="8.5" rx="0.4" fill="#f8fafc" stroke="#dcdcdc" stroke-width="0.5"/><rect x="0.3" y="0.3" width="8" height="2" fill="#cfe8cf"/><path d="M2.6 6.8L5.6 3.8M3.9 3.6H5.8V5.5" stroke="#a8c8e8" stroke-width="0.55" fill="none"/><path d="M1.5 7.6H6.5" stroke="#d0dce8" stroke-width="0.4"/></svg>
<svg class="a" style="left:144.2px;top:278.9px;" width="9" height="9" viewBox="0 0 9 9"><path d="M2.3 2.2V0.5H6.5V2.2" fill="none" stroke="#cfcfcf" stroke-width="0.7"/><rect x="0.5" y="2.2" width="8" height="3.8" rx="1.2" fill="none" stroke="#cfcfcf" stroke-width="0.6"/><path d="M2.2 6V7.8H5" fill="none" stroke="#cfcfcf" stroke-width="0.5"/><circle cx="6.8" cy="6.6" r="1.6" fill="#eef5fb" stroke="#b8d4ec" stroke-width="0.5"/></svg>
<div class="a" style="left:104.8px;top:287.61999999999995px;width:684.2px;height:0.6px;background:#eeeeee"></div>
<div class="t" style="left:119.3px;top:291.22px;font-size:5.4px;color:#cccccc;font-weight:bold;letter-spacing:0.5px">300600</div>
<div class="t" style="left:157px;top:291.22px;font-size:5.3px;color:#cbcbcb;font-weight:bold;letter-spacing:0.24px">Test Thomas 1</div>
<div class="a" style="left:154.2px;top:287.91999999999996px;width:0.6px;height:10.52px;background:#ececec"></div>
<div class="a" style="left:471px;top:287.91999999999996px;width:0.6px;height:10.52px;background:#ececec"></div>
<div class="a" style="left:104.8px;top:298.13999999999993px;width:684.2px;height:0.6px;background:#eeeeee"></div>
<div class="t" style="left:114.8px;top:301.74px;font-size:5.3px;color:#c8c8c8;">0</div>
<div class="a" style="left:128.5px;top:298.44px;width:0.6px;height:10.52px;background:#eeeeee"></div>
<div class="a" style="left:141.6px;top:298.44px;width:0.6px;height:10.52px;background:#eeeeee"></div>
<div class="a" style="left:154.2px;top:298.44px;width:0.6px;height:10.52px;background:#eeeeee"></div>
<svg class="a" style="left:131px;top:299.54px;" width="9" height="9" viewBox="0 0 9 9"><rect x="0.3" y="0.3" width="8" height="8.5" rx="0.4" fill="#f8fafc" stroke="#dcdcdc" stroke-width="0.5"/><rect x="0.3" y="0.3" width="8" height="2" fill="#cfe8cf"/><path d="M2.6 6.8L5.6 3.8M3.9 3.6H5.8V5.5" stroke="#a8c8e8" stroke-width="0.55" fill="none"/><path d="M1.5 7.6H6.5" stroke="#d0dce8" stroke-width="0.4"/></svg>
<svg class="a" style="left:144.2px;top:299.94px;" width="9" height="9" viewBox="0 0 9 9"><path d="M2.3 2.2V0.5H6.5V2.2" fill="none" stroke="#cfcfcf" stroke-width="0.7"/><rect x="0.5" y="2.2" width="8" height="3.8" rx="1.2" fill="none" stroke="#cfcfcf" stroke-width="0.6"/><path d="M2.2 6V7.8H5" fill="none" stroke="#cfcfcf" stroke-width="0.5"/><circle cx="6.8" cy="6.6" r="1.6" fill="#eef5fb" stroke="#b8d4ec" stroke-width="0.5"/></svg>
<div class="a" style="left:104.8px;top:308.65999999999997px;width:684.2px;height:0.6px;background:#eeeeee"></div>
<div class="a" style="left:104.8px;top:309.46px;width:684.2px;height:10.02px;background:#c3dbef"></div>
<div class="t" style="left:119.3px;top:312.26px;font-size:5.4px;color:#ffffff;font-weight:bold;letter-spacing:0.5px">300700</div>
<div class="t" style="left:157px;top:312.26px;font-size:5.3px;color:#ffffff;font-weight:bold;letter-spacing:0.24px">Rolling Shutter</div>
<div class="a" style="left:154.2px;top:308.96px;width:0.6px;height:10.52px;background:#d6e6f3"></div>
<div class="a" style="left:471px;top:308.96px;width:0.6px;height:10.52px;background:#ececec"></div>
<div class="a" style="left:104.8px;top:319.17999999999995px;width:684.2px;height:0.6px;background:#d6e6f3"></div>
<div class="a" style="left:104.8px;top:319.98px;width:684.2px;height:10.02px;background:#c3dbef"></div>
<div class="t" style="left:114.8px;top:322.78px;font-size:5.3px;color:#ffffff;">3</div>
<div class="a" style="left:128.5px;top:319.48px;width:0.6px;height:10.52px;background:#d6e6f3"></div>
<div class="a" style="left:141.6px;top:319.48px;width:0.6px;height:10.52px;background:#d6e6f3"></div>
<div class="a" style="left:154.2px;top:319.48px;width:0.6px;height:10.52px;background:#d6e6f3"></div>
<svg class="a" style="left:131px;top:320.58000000000004px;" width="9" height="9" viewBox="0 0 9 9"><rect x="0.3" y="0.3" width="8" height="8.5" fill="#f4f8fc" stroke="#e0e8f0" stroke-width="0.5"/><rect x="0.3" y="0.3" width="8" height="2" fill="#d8ecd8"/><path d="M2.6 6.8L5.6 3.8M3.9 3.6H5.8V5.5" stroke="#c8dcee" stroke-width="0.55" fill="none"/></svg>
<svg class="a" style="left:144.2px;top:320.98px;" width="9" height="9" viewBox="0 0 9 9"><path d="M2.3 2.2V0.5H6.5V2.2" fill="none" stroke="#f0f4f8" stroke-width="0.7"/><rect x="0.5" y="2.2" width="8" height="3.8" rx="1.2" fill="none" stroke="#f0f4f8" stroke-width="0.6"/><path d="M2.2 6V7.8H5" fill="none" stroke="#f0f4f8" stroke-width="0.5"/><circle cx="6.8" cy="6.6" r="1.6" fill="#a8bccc" stroke="#ffffff" stroke-width="0.5"/></svg>
<div class="t" style="left:156px;top:322.78px;font-size:5.37px;color:#ffffff;">Rolling Shutter - Rolling Shutter</div>
<div class="a" style="left:104.8px;top:329.7px;width:684.2px;height:0.6px;background:#eeeeee"></div>
<div class="t" style="left:119.3px;top:333.3px;font-size:5.4px;color:#cccccc;font-weight:bold;letter-spacing:0.5px">300701</div>
<div class="t" style="left:157px;top:333.3px;font-size:5.3px;color:#cbcbcb;font-weight:bold;letter-spacing:0.24px">Rolling Shutter Inch</div>
<div class="a" style="left:154.2px;top:330.0px;width:0.6px;height:10.52px;background:#ececec"></div>
<div class="a" style="left:471px;top:330.0px;width:0.6px;height:10.52px;background:#ececec"></div>
<div class="a" style="left:104.8px;top:340.21999999999997px;width:684.2px;height:0.6px;background:#eeeeee"></div>
<div class="t" style="left:114.8px;top:343.82px;font-size:5.3px;color:#c8c8c8;">3</div>
<div class="a" style="left:128.5px;top:340.52px;width:0.6px;height:10.52px;background:#eeeeee"></div>
<div class="a" style="left:141.6px;top:340.52px;width:0.6px;height:10.52px;background:#eeeeee"></div>
<div class="a" style="left:154.2px;top:340.52px;width:0.6px;height:10.52px;background:#eeeeee"></div>
<svg class="a" style="left:131px;top:341.62px;" width="9" height="9" viewBox="0 0 9 9"><rect x="0.3" y="0.3" width="8" height="8.5" rx="0.4" fill="#f8fafc" stroke="#dcdcdc" stroke-width="0.5"/><rect x="0.3" y="0.3" width="8" height="2" fill="#cfe8cf"/><path d="M2.6 6.8L5.6 3.8M3.9 3.6H5.8V5.5" stroke="#a8c8e8" stroke-width="0.55" fill="none"/><path d="M1.5 7.6H6.5" stroke="#d0dce8" stroke-width="0.4"/></svg>
<div class="t" style="left:156px;top:343.82px;font-size:5.37px;color:#c8c8c8;">Rolling Shutter inch - Rolling Shutter</div>
<div class="a" style="left:104.8px;top:350.73999999999995px;width:684.2px;height:0.6px;background:#eeeeee"></div>
<div class="t" style="left:119.3px;top:354.34px;font-size:5.4px;color:#cccccc;font-weight:bold;letter-spacing:0.5px">300900</div>
<div class="t" style="left:157px;top:354.34px;font-size:5.3px;color:#cbcbcb;font-weight:bold;letter-spacing:0.24px">Projects list</div>
<div class="a" style="left:154.2px;top:351.03999999999996px;width:0.6px;height:10.52px;background:#ececec"></div>
<div class="a" style="left:471px;top:351.03999999999996px;width:0.6px;height:10.52px;background:#ececec"></div>
<div class="a" style="left:104.8px;top:361.25999999999993px;width:684.2px;height:0.6px;background:#eeeeee"></div>
<div class="t" style="left:114.8px;top:364.86px;font-size:5.3px;color:#c8c8c8;">0</div>
<div class="a" style="left:128.5px;top:361.55999999999995px;width:0.6px;height:10.52px;background:#eeeeee"></div>
<div class="a" style="left:141.6px;top:361.55999999999995px;width:0.6px;height:10.52px;background:#eeeeee"></div>
<div class="a" style="left:154.2px;top:361.55999999999995px;width:0.6px;height:10.52px;background:#eeeeee"></div>
<svg class="a" style="left:131px;top:362.65999999999997px;" width="9" height="9" viewBox="0 0 9 9"><rect x="0.3" y="0.3" width="8" height="8.5" rx="0.4" fill="#f8fafc" stroke="#dcdcdc" stroke-width="0.5"/><rect x="0.3" y="0.3" width="8" height="2" fill="#cfe8cf"/><path d="M2.6 6.8L5.6 3.8M3.9 3.6H5.8V5.5" stroke="#a8c8e8" stroke-width="0.55" fill="none"/><path d="M1.5 7.6H6.5" stroke="#d0dce8" stroke-width="0.4"/></svg>
<svg class="a" style="left:144.2px;top:363.05999999999995px;" width="9" height="9" viewBox="0 0 9 9"><path d="M2.3 2.2V0.5H6.5V2.2" fill="none" stroke="#cfcfcf" stroke-width="0.7"/><rect x="0.5" y="2.2" width="8" height="3.8" rx="1.2" fill="none" stroke="#cfcfcf" stroke-width="0.6"/><path d="M2.2 6V7.8H5" fill="none" stroke="#cfcfcf" stroke-width="0.5"/><circle cx="6.8" cy="6.6" r="1.6" fill="#eef5fb" stroke="#b8d4ec" stroke-width="0.5"/></svg>
<div class="a" style="left:104.8px;top:371.7799999999999px;width:684.2px;height:0.6px;background:#eeeeee"></div>
<div class="t" style="left:119.3px;top:375.38px;font-size:5.4px;color:#cccccc;font-weight:bold;letter-spacing:0.5px">301050</div>
<div class="t" style="left:157px;top:375.38px;font-size:5.3px;color:#cbcbcb;font-weight:bold;letter-spacing:0.24px">Drawings and Cut sheets</div>
<div class="a" style="left:154.2px;top:372.08px;width:0.6px;height:10.52px;background:#ececec"></div>
<div class="a" style="left:471px;top:372.08px;width:0.6px;height:10.52px;background:#ececec"></div>
<div class="a" style="left:104.8px;top:382.29999999999995px;width:684.2px;height:0.6px;background:#eeeeee"></div>
<div class="t" style="left:114.8px;top:385.9px;font-size:5.3px;color:#c8c8c8;">4</div>
<div class="a" style="left:128.5px;top:382.6px;width:0.6px;height:10.52px;background:#eeeeee"></div>
<div class="a" style="left:141.6px;top:382.6px;width:0.6px;height:10.52px;background:#eeeeee"></div>
<div class="a" style="left:154.2px;top:382.6px;width:0.6px;height:10.52px;background:#eeeeee"></div>
<svg class="a" style="left:131px;top:383.70000000000005px;" width="9" height="9" viewBox="0 0 9 9"><rect x="0.3" y="0.3" width="8" height="8.5" rx="0.4" fill="#f8fafc" stroke="#dcdcdc" stroke-width="0.5"/><rect x="0.3" y="0.3" width="8" height="2" fill="#cfe8cf"/><path d="M2.6 6.8L5.6 3.8M3.9 3.6H5.8V5.5" stroke="#a8c8e8" stroke-width="0.55" fill="none"/><path d="M1.5 7.6H6.5" stroke="#d0dce8" stroke-width="0.4"/></svg>
<div class="t" style="left:156px;top:385.9px;font-size:5.37px;color:#c8c8c8;">Roll Shutter - Shop Drawings;Roll Shutter - Cut sheet;Zip Tex - Shop Drawings;ZipTex - Cut sheet;HV - Shop Drawings;HV - Sheet;Scorpion - Shop Drawings;Scorpion - Cut sheet;Security Grille - Shop Drawings;Security Grille - Cut sheet;StudioStar - Shop Drawings</div>
<div class="a" style="left:104.8px;top:392.82px;width:684.2px;height:0.6px;background:#eeeeee"></div>
<div class="t" style="left:119.3px;top:396.42px;font-size:5.4px;color:#cccccc;font-weight:bold;letter-spacing:0.5px">301100</div>
<div class="t" style="left:157px;top:396.42px;font-size:5.3px;color:#cbcbcb;font-weight:bold;letter-spacing:0.24px">Roll Shutter - Shop Drawings</div>
<div class="a" style="left:154.2px;top:393.12px;width:0.6px;height:10.52px;background:#ececec"></div>
<div class="a" style="left:471px;top:393.12px;width:0.6px;height:10.52px;background:#ececec"></div>
<div class="a" style="left:104.8px;top:403.34px;width:684.2px;height:0.6px;background:#eeeeee"></div>
<div class="t" style="left:114.8px;top:406.94px;font-size:5.3px;color:#c8c8c8;">3</div>
<div class="a" style="left:128.5px;top:403.64px;width:0.6px;height:10.52px;background:#eeeeee"></div>
<div class="a" style="left:141.6px;top:403.64px;width:0.6px;height:10.52px;background:#eeeeee"></div>
<div class="a" style="left:154.2px;top:403.64px;width:0.6px;height:10.52px;background:#eeeeee"></div>
<svg class="a" style="left:131px;top:404.74px;" width="9" height="9" viewBox="0 0 9 9"><rect x="0.3" y="0.3" width="8" height="8.5" rx="0.4" fill="#f8fafc" stroke="#dcdcdc" stroke-width="0.5"/><rect x="0.3" y="0.3" width="8" height="2" fill="#cfe8cf"/><path d="M2.6 6.8L5.6 3.8M3.9 3.6H5.8V5.5" stroke="#a8c8e8" stroke-width="0.55" fill="none"/><path d="M1.5 7.6H6.5" stroke="#d0dce8" stroke-width="0.4"/></svg>
<svg class="a" style="left:144.2px;top:405.14px;" width="9" height="9" viewBox="0 0 9 9"><path d="M2.3 2.2V0.5H6.5V2.2" fill="none" stroke="#cfcfcf" stroke-width="0.7"/><rect x="0.5" y="2.2" width="8" height="3.8" rx="1.2" fill="none" stroke="#cfcfcf" stroke-width="0.6"/><path d="M2.2 6V7.8H5" fill="none" stroke="#cfcfcf" stroke-width="0.5"/><circle cx="6.8" cy="6.6" r="1.6" fill="#eef5fb" stroke="#b8d4ec" stroke-width="0.5"/></svg>
<div class="t" style="left:156px;top:406.94px;font-size:5.37px;color:#c8c8c8;">Roll Shutter - Shop_Drawing_AluStar</div>
<div class="a" style="left:104.8px;top:413.85999999999996px;width:684.2px;height:0.6px;background:#eeeeee"></div>
<div class="t" style="left:119.3px;top:417.46px;font-size:5.4px;color:#cccccc;font-weight:bold;letter-spacing:0.5px">301101</div>
<div class="t" style="left:157px;top:417.46px;font-size:5.3px;color:#cbcbcb;font-weight:bold;letter-spacing:0.24px">Roll Shutter - Cut sheet</div>
<div class="a" style="left:154.2px;top:414.15999999999997px;width:0.6px;height:10.52px;background:#ececec"></div>
<div class="a" style="left:471px;top:414.15999999999997px;width:0.6px;height:10.52px;background:#ececec"></div>
<div class="a" style="left:104.8px;top:424.37999999999994px;width:684.2px;height:0.6px;background:#eeeeee"></div>
<div class="t" style="left:114.8px;top:427.98px;font-size:5.3px;color:#c8c8c8;">3</div>
<div class="a" style="left:128.5px;top:424.67999999999995px;width:0.6px;height:10.52px;background:#eeeeee"></div>
<div class="a" style="left:141.6px;top:424.67999999999995px;width:0.6px;height:10.52px;background:#eeeeee"></div>
<div class="a" style="left:154.2px;top:424.67999999999995px;width:0.6px;height:10.52px;background:#eeeeee"></div>
<svg class="a" style="left:131px;top:425.78px;" width="9" height="9" viewBox="0 0 9 9"><rect x="0.3" y="0.3" width="8" height="8.5" rx="0.4" fill="#f8fafc" stroke="#dcdcdc" stroke-width="0.5"/><rect x="0.3" y="0.3" width="8" height="2" fill="#cfe8cf"/><path d="M2.6 6.8L5.6 3.8M3.9 3.6H5.8V5.5" stroke="#a8c8e8" stroke-width="0.55" fill="none"/><path d="M1.5 7.6H6.5" stroke="#d0dce8" stroke-width="0.4"/></svg>
<svg class="a" style="left:144.2px;top:426.17999999999995px;" width="9" height="9" viewBox="0 0 9 9"><path d="M2.3 2.2V0.5H6.5V2.2" fill="none" stroke="#cfcfcf" stroke-width="0.7"/><rect x="0.5" y="2.2" width="8" height="3.8" rx="1.2" fill="none" stroke="#cfcfcf" stroke-width="0.6"/><path d="M2.2 6V7.8H5" fill="none" stroke="#cfcfcf" stroke-width="0.5"/><circle cx="6.8" cy="6.6" r="1.6" fill="#eef5fb" stroke="#b8d4ec" stroke-width="0.5"/></svg>
<div class="t" style="left:156px;top:427.98px;font-size:5.37px;color:#c8c8c8;">Roll Shutter - Shop_Drawing_AluStar</div>
<div class="a" style="left:104.8px;top:434.8999999999999px;width:684.2px;height:0.6px;background:#eeeeee"></div>
<div class="a" style="left:789.3px;top:119.5px;width:9px;height:315.5px;background:#efefef"></div>
<div class="a" style="left:798px;top:76px;width:2px;height:359.5px;background:#eaeaea"></div>
<div class="a" style="left:790.5px;top:121px;width:6.4px;height:7px;background:#ffffff"></div>
<svg class="a" style="left:792.3px;top:123.4px;" width="3" height="2" viewBox="0 0 3 2"><path d="M0 1.8L1.4 0.3L2.8 1.8Z" fill="#9a9a9a"/></svg>
<div class="a" style="left:790.5px;top:425.8px;width:6.4px;height:7.5px;background:#ffffff"></div>
<svg class="a" style="left:792.3px;top:428.6px;" width="3" height="2" viewBox="0 0 3 2"><path d="M0 0.3L1.4 1.8L2.8 0.3Z" fill="#b0b0b0"/></svg>
<div class="a" style="left:104.8px;top:434.9px;width:693.9000000000001px;height:0.7px;background:#d8d8d8"></div>
<svg class="a" style="left:792.8px;top:441.4px;" width="3" height="2.5" viewBox="0 0 3 2.5"><path d="M0 0.3H2.6L1.3 2Z" fill="#555"/><path d="M0 0.2H2.6" stroke="#555" stroke-width="0.5"/></svg>
<div class="a" style="left:278px;top:113px;width:244px;height:220.5px;background:#ffffff;border:1px solid #b8b8b8;box-shadow:1px 1.5px 4px rgba(0,0,0,0.22)"></div>
<svg class="a" style="left:282.5px;top:116.5px;" width="8.5" height="8.5" viewBox="0 0 8.5 8.5"><ellipse cx="4.1" cy="4.2" rx="3.6" ry="3.9" fill="none" stroke="#c4c4c4" stroke-width="0.6"/><path d="M3.6 1.4V7M4.7 1.4V7" stroke="#c4c4c4" stroke-width="0.55"/></svg>
<div class="t" style="left:294px;top:118.2px;font-size:6.2px;color:#b0b0b0;">Modify print report</div>
<svg class="a" style="left:510.5px;top:118px;" width="6" height="6" viewBox="0 0 6 6"><path d="M0.3 0.3L5.5 5.5M5.5 0.3L0.3 5.5" stroke="#8a8a8a" stroke-width="0.5"/></svg>
<div class="a" style="left:282.3px;top:131.2px;width:235.7px;height:184.6px;background:#f4f4f4;border:0.6px solid #dcdcdc"></div>
<div class="t" style="left:292.5px;top:142.0px;font-size:5.2px;color:#1a1a1a;">Module</div>
<div class="a" style="left:358px;top:139px;width:109.5px;height:10.7px;background:#c9c9c9"></div>
<div class="t" style="left:361px;top:142.4px;font-size:5.2px;color:#8a8a8a;">[300000] Projects</div>
<svg class="a" style="left:460px;top:143px;" width="5" height="3" viewBox="0 0 5 3"><path d="M0.4 0.4L2.5 2.4L4.6 0.4" fill="none" stroke="#a8a8a8" stroke-width="0.5"/></svg>
<div class="a" style="left:473px;top:139px;width:40px;height:10.7px;background:#fff;border:0.7px solid #9a9a9a"></div>
<div class="t" style="left:475px;top:142.4px;font-size:5.2px;color:#222;">300700</div>
<div class="t" style="left:292.5px;top:157.2px;font-size:5.2px;color:#1a1a1a;">Text</div>
<div class="a" style="left:358px;top:154px;width:155px;height:10.7px;background:#fff;border:0.7px solid #9a9a9a"></div>
<div class="t" style="left:360px;top:157.4px;font-size:5.2px;color:#222;">Rolling Shutter</div>
<div class="t" style="left:292.5px;top:172.0px;font-size:5.2px;color:#1a1a1a;">Selection querys</div>
<svg class="a" style="left:358.3px;top:170px;" width="7" height="7" viewBox="0 0 7 7"><rect x="0.3" y="0.3" width="6.2" height="6.2" fill="#fff" stroke="#7a7a7a" stroke-width="0.6"/><path d="M1.3 3.3L2.8 4.9L5.6 1.6" fill="none" stroke="#333" stroke-width="0.65"/></svg>
<div class="t" style="left:430.5px;top:172.0px;font-size:5.2px;color:#1a1a1a;">Printer selection when printing</div>
<svg class="a" style="left:506px;top:170px;" width="7" height="7" viewBox="0 0 7 7"><rect x="0.3" y="0.3" width="6.2" height="6.2" fill="#fff" stroke="#7a7a7a" stroke-width="0.6"/><path d="M1.3 3.3L2.8 4.9L5.6 1.6" fill="none" stroke="#333" stroke-width="0.65"/></svg>
<div class="t" style="left:292.5px;top:187.2px;font-size:5.2px;color:#1a1a1a;">Type of report</div>
<div class="a" style="left:358px;top:184.3px;width:155px;height:10.5px;background:#e3e3e3;border:0.6px solid #b8b8b8"></div>
<div class="t" style="left:361px;top:187.7px;font-size:5.2px;color:#222;">Measurement sheet</div>
<svg class="a" style="left:506px;top:188.55px;" width="5" height="3" viewBox="0 0 5 3"><path d="M0.4 0.4L2.5 2.4L4.6 0.4" fill="none" stroke="#555" stroke-width="0.6"/></svg>
<div class="t" style="left:292.5px;top:200.8px;font-size:5.2px;color:#1a1a1a;">Selection querys</div>
<div class="a" style="left:358px;top:198.1px;width:155px;height:10.4px;background:#e3e3e3;border:0.6px solid #b8b8b8"></div>
<div class="t" style="left:361px;top:201.5px;font-size:5.2px;color:#222;">Standard</div>
<svg class="a" style="left:506px;top:202.29999999999998px;" width="5" height="3" viewBox="0 0 5 3"><path d="M0.4 0.4L2.5 2.4L4.6 0.4" fill="none" stroke="#555" stroke-width="0.6"/></svg>
<div class="t" style="left:292.5px;top:214.0px;font-size:5.2px;color:#1a1a1a;">Printer</div>
<div class="a" style="left:358px;top:211.2px;width:155px;height:10.4px;background:#e3e3e3;border:0.6px solid #b8b8b8"></div>
<svg class="a" style="left:506px;top:215.39999999999998px;" width="5" height="3" viewBox="0 0 5 3"><path d="M0.4 0.4L2.5 2.4L4.6 0.4" fill="none" stroke="#555" stroke-width="0.6"/></svg>
<div class="t" style="left:292.5px;top:229.0px;font-size:5.2px;color:#1a1a1a;">Attach PDF</div>
<svg class="a" style="left:358.3px;top:227px;" width="7" height="7" viewBox="0 0 7 7"><rect x="0.3" y="0.3" width="6.2" height="6.2" fill="#fff" stroke="#c4c4c4" stroke-width="0.6"/></svg>
<div class="t" style="left:292px;top:240.4px;font-size:5.2px;color:#1a1a1a;">Show report for</div>
<div class="t" style="left:292px;top:246.6px;font-size:5.2px;color:#1a1a1a;">All documents</div>
<div class="t" style="left:412.8px;top:246.4px;font-size:5.2px;color:#1a1a1a;">Selected documents</div>
<div class="a" style="left:290.3px;top:253.3px;width:101.5px;height:53.8px;background:#fff;border:0.7px solid #b4b4b4"></div>
<div class="t" style="left:292px;top:255.3px;font-size:5.2px;color:#222;">B2B Quote</div>
<div class="t" style="left:292px;top:261.85px;font-size:5.2px;color:#222;">PartsQuote</div>
<div class="t" style="left:292px;top:268.4px;font-size:5.2px;color:#222;">Quotation</div>
<div class="a" style="left:291px;top:274.05px;width:90.8px;height:6.3px;background:#0078d7"></div>
<div class="t" style="left:292px;top:274.95px;font-size:5.2px;color:#fff;">Orderconfirmation</div>
<div class="t" style="left:292px;top:281.5px;font-size:5.2px;color:#222;">Production Order</div>
<div class="t" style="left:292px;top:288.05px;font-size:5.2px;color:#222;">Service order</div>
<div class="t" style="left:292px;top:294.6px;font-size:5.2px;color:#222;">Invoice</div>
<div class="t" style="left:292px;top:301.15px;font-size:5.2px;color:#222;">Delivery note</div>
<div class="a" style="left:382.5px;top:254px;width:8.5px;height:52.5px;background:#f0f0f0"></div>
<div class="a" style="left:382.6px;top:262.7px;width:7.2px;height:25.3px;background:#cdcdcd"></div>
<svg class="a" style="left:384.3px;top:257.8px;" width="5" height="3" viewBox="0 0 5 3"><path d="M0.4 2.2L2 0.6L3.6 2.2" fill="none" stroke="#3a3a3a" stroke-width="0.8"/></svg>
<svg class="a" style="left:384.3px;top:301px;" width="5" height="3" viewBox="0 0 5 3"><path d="M0.4 0.6L2 2.2L3.6 0.6" fill="none" stroke="#3a3a3a" stroke-width="0.8"/></svg>
<div class="a" style="left:393.5px;top:254px;width:15px;height:11.8px;background:#e1e1e1;border:0.6px solid #d4d4d4"></div>
<svg class="a" style="left:398.2px;top:258.59999999999997px;" width="5" height="4" viewBox="0 0 5 4"><path d="M0.3 0.3L1.8 1.8L0.3 3.3M3 0.3L4.5 1.8L3 3.3" fill="none" stroke="#333333" stroke-width="0.7"/></svg>
<div class="a" style="left:393.5px;top:267.5px;width:15px;height:11.8px;background:#e1e1e1;border:0.6px solid #d4d4d4"></div>
<svg class="a" style="left:400.2px;top:272.09999999999997px;" width="3" height="4" viewBox="0 0 3 4"><path d="M0.3 0.3L1.8 1.8L0.3 3.3" fill="none" stroke="#333333" stroke-width="0.7"/></svg>
<div class="a" style="left:393.5px;top:281.5px;width:15px;height:11.8px;background:#e1e1e1;border:0.6px solid #d4d4d4"></div>
<svg class="a" style="left:399.8px;top:286.09999999999997px;" width="3" height="4" viewBox="0 0 3 4"><path d="M1.8 0.3L0.3 1.8L1.8 3.3" fill="none" stroke="#333333" stroke-width="0.7"/></svg>
<div class="a" style="left:393.5px;top:295px;width:15px;height:11.8px;background:#e1e1e1;border:0.6px solid #d4d4d4"></div>
<svg class="a" style="left:398.2px;top:299.59999999999997px;" width="5" height="4" viewBox="0 0 5 4"><path d="M1.8 0.3L0.3 1.8L1.8 3.3M4.5 0.3L3 1.8L4.5 3.3" fill="none" stroke="#333333" stroke-width="0.7"/></svg>
<div class="a" style="left:411px;top:253.8px;width:101.5px;height:53.3px;background:#fff;border:0.7px solid #b4b4b4"></div>
<div class="a" style="left:411.6px;top:254.4px;width:100px;height:6.2px;background:#0078d7"></div>
<div class="t" style="left:412.6px;top:255.4px;font-size:5.2px;color:#fff;">Orderconfirmation</div>
<div class="a" style="left:362.5px;top:319.4px;width:48px;height:9.7px;background:#e1e1e1;border:0.7px solid #c0c0c0"></div>
<div class="t" style="left:371px;top:322.4px;font-size:5.2px;color:#222;">Load report ...</div>
<div class="a" style="left:416px;top:319.4px;width:48px;height:9.7px;background:#e1e1e1;border:1px solid #0078d7"></div>
<div class="t" style="left:436px;top:322.4px;font-size:5.2px;color:#222;">OK</div>
<div class="a" style="left:469px;top:319.4px;width:48.7px;height:9.7px;background:#e1e1e1;border:0.7px solid #c0c0c0"></div>
<div class="t" style="left:487px;top:322.4px;font-size:5.2px;color:#222;">Abort</div>
</body></html>
